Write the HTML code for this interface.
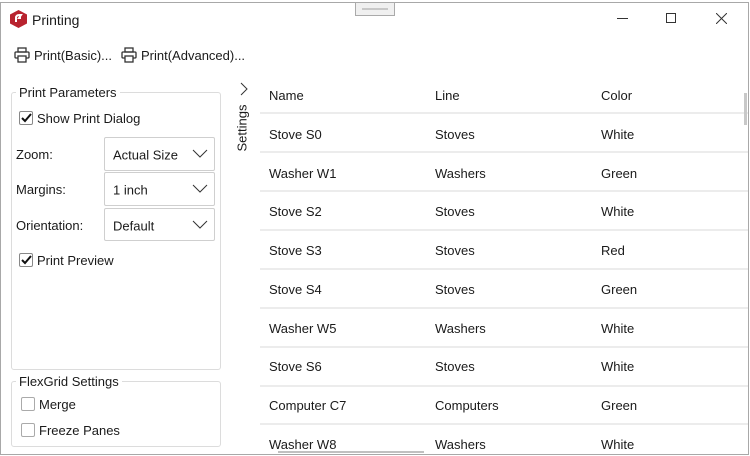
<!DOCTYPE html>
<html><head><style>
*{box-sizing:border-box;margin:0;padding:0}
body{width:750px;height:456px;background:#fff;font-family:"Liberation Sans",sans-serif;font-size:13px;color:#1a1a1a;position:relative;overflow:hidden}
.a{position:absolute;white-space:nowrap}
.t{margin-top:2px}
.win{position:absolute;left:0;top:2px;width:749px;height:453px;border:1px solid #a8a8a8}
.grp{position:absolute;border:1px solid #dcdcdc;border-radius:3px}
.leg{position:absolute;background:#fff;padding:0 3px;font-size:13px;margin-top:2px}
.cb{position:absolute;width:14px;height:14px;border:1px solid #888;border-radius:2px;background:#fff}
.cb.u{border-color:#aaa}
.combo{position:absolute;left:104px;width:111px;border:1px solid #cfcfcf;border-radius:2px}
.combo span{position:absolute;left:8px;top:50%;transform:translateY(-45%)}
.combo svg{position:absolute;right:6px;top:50%;margin-top:-5px}
.sep{position:absolute;left:260px;width:488px;height:2px;background:#ececec}
.g .a{margin-top:2px}
</style></head><body>
<div class="win"></div>
<svg class="a" style="left:10px;top:10px" width="17" height="18" viewBox="0 0 17 18"><polygon points="8.5,0 17,4.5 17,13.5 8.5,18 0,13.5 0,4.5" fill="#b8232f"/><path d="M6 12 L6 8 Q6 5 9.5 5 L11 5 L9 8 L11 8" stroke="#fff" stroke-width="2" fill="none"/></svg>
<div class="a t" style="left:32px;top:10px;font-size:14px">Printing</div>
<div class="a" style="left:355px;top:2px;width:40px;height:14px;border:1px solid #aaa;background:#f0f0f0"></div>
<div class="a" style="left:362px;top:8px;width:26px;height:2px;background:#c8c8c8"></div>
<div class="a" style="left:617px;top:18px;width:11px;height:1px;background:#333"></div>
<div class="a" style="left:666px;top:13px;width:10px;height:10px;border:1px solid #333"></div>
<svg class="a" style="left:716px;top:13px" width="11" height="11"><path d="M0 0L11 11M11 0L0 11" stroke="#333" stroke-width="1"/></svg>
<svg class="a" style="left:14px;top:47px" width="16" height="16" viewBox="0 0 16 16" fill="none" stroke="#333" stroke-width="1.3"><rect x="4" y="1" width="8" height="4"/><rect x="1" y="5" width="14" height="6" rx="1"/><rect x="4" y="9" width="8" height="6" fill="#fff"/></svg>
<div class="a t" style="left:34px;top:46px">Print(Basic)...</div>
<svg class="a" style="left:121px;top:47px" width="16" height="16" viewBox="0 0 16 16" fill="none" stroke="#333" stroke-width="1.3"><rect x="4" y="1" width="8" height="4"/><rect x="1" y="5" width="14" height="6" rx="1"/><rect x="4" y="9" width="8" height="6" fill="#fff"/></svg>
<div class="a t" style="left:141px;top:46px">Print(Advanced)...</div>
<div class="grp" style="left:11px;top:92px;width:210px;height:278px"></div>
<div class="leg" style="left:16px;top:83px">Print Parameters</div>
<div class="cb" style="left:19px;top:111px"></div><svg class="a" style="left:21px;top:113px" width="11" height="10"><path d="M1 5L4 8L10 1" stroke="#111" stroke-width="2" fill="none"/></svg>
<div class="a t" style="left:37px;top:109px">Show Print Dialog</div>
<div class="a t" style="left:16px;top:145px">Zoom:</div>
<div class="combo" style="top:137px;height:34px"><span>Actual Size</span><svg width="16" height="9"><path d="M1 1L8 8L15 1" stroke="#333" fill="none"/></svg></div>
<div class="a t" style="left:16px;top:180px">Margins:</div>
<div class="combo" style="top:172px;height:34px"><span>1 inch</span><svg width="16" height="9"><path d="M1 1L8 8L15 1" stroke="#333" fill="none"/></svg></div>
<div class="a t" style="left:16px;top:216px">Orientation:</div>
<div class="combo" style="top:208px;height:33px"><span>Default</span><svg width="16" height="9"><path d="M1 1L8 8L15 1" stroke="#333" fill="none"/></svg></div>
<div class="cb" style="left:19px;top:253px"></div><svg class="a" style="left:21px;top:255px" width="11" height="10"><path d="M1 5L4 8L10 1" stroke="#111" stroke-width="2" fill="none"/></svg>
<div class="a t" style="left:37px;top:251px">Print Preview</div>
<div class="grp" style="left:11px;top:381px;width:210px;height:66px"></div>
<div class="leg" style="left:16px;top:372px">FlexGrid Settings</div>
<div class="cb u" style="left:21px;top:397px"></div><div class="a t" style="left:39px;top:395px">Merge</div>
<div class="cb u" style="left:21px;top:423px"></div><div class="a t" style="left:39px;top:421px">Freeze Panes</div>
<svg class="a" style="left:239px;top:82px" width="10" height="14"><path d="M2 1L8 7L2 13" stroke="#333" fill="none"/></svg>
<div class="a" style="left:219px;top:121px;transform:rotate(-90deg);transform-origin:center;width:46px;text-align:center;font-size:13px">Settings</div>
<div class="g">
<div class="a" style="left:269px;top:86px">Name</div><div class="a" style="left:435px;top:86px">Line</div><div class="a" style="left:601px;top:86px">Color</div>
<div class="sep" style="top:112px"></div>
<div class="a" style="left:269px;top:125px">Stove S0</div><div class="a" style="left:435px;top:125px">Stoves</div><div class="a" style="left:601px;top:125px">White</div>
<div class="sep" style="top:151px"></div>
<div class="a" style="left:269px;top:164px">Washer W1</div><div class="a" style="left:435px;top:164px">Washers</div><div class="a" style="left:601px;top:164px">Green</div>
<div class="sep" style="top:190px"></div>
<div class="a" style="left:269px;top:202px">Stove S2</div><div class="a" style="left:435px;top:202px">Stoves</div><div class="a" style="left:601px;top:202px">White</div>
<div class="sep" style="top:229px"></div>
<div class="a" style="left:269px;top:241px">Stove S3</div><div class="a" style="left:435px;top:241px">Stoves</div><div class="a" style="left:601px;top:241px">Red</div>
<div class="sep" style="top:268px"></div>
<div class="a" style="left:269px;top:280px">Stove S4</div><div class="a" style="left:435px;top:280px">Stoves</div><div class="a" style="left:601px;top:280px">Green</div>
<div class="sep" style="top:307px"></div>
<div class="a" style="left:269px;top:319px">Washer W5</div><div class="a" style="left:435px;top:319px">Washers</div><div class="a" style="left:601px;top:319px">White</div>
<div class="sep" style="top:346px"></div>
<div class="a" style="left:269px;top:357px">Stove S6</div><div class="a" style="left:435px;top:357px">Stoves</div><div class="a" style="left:601px;top:357px">White</div>
<div class="sep" style="top:385px"></div>
<div class="a" style="left:269px;top:396px">Computer C7</div><div class="a" style="left:435px;top:396px">Computers</div><div class="a" style="left:601px;top:396px">Green</div>
<div class="sep" style="top:423px"></div>
<div class="a" style="left:269px;top:435px">Washer W8</div><div class="a" style="left:435px;top:435px">Washers</div><div class="a" style="left:601px;top:435px">White</div>
</div>
<div class="a" style="left:744px;top:93px;width:3px;height:32px;background:#c8c8c8"></div>
<div class="a" style="left:278px;top:451px;width:146px;height:2px;background:#c0c0c0"></div>
</body></html>
